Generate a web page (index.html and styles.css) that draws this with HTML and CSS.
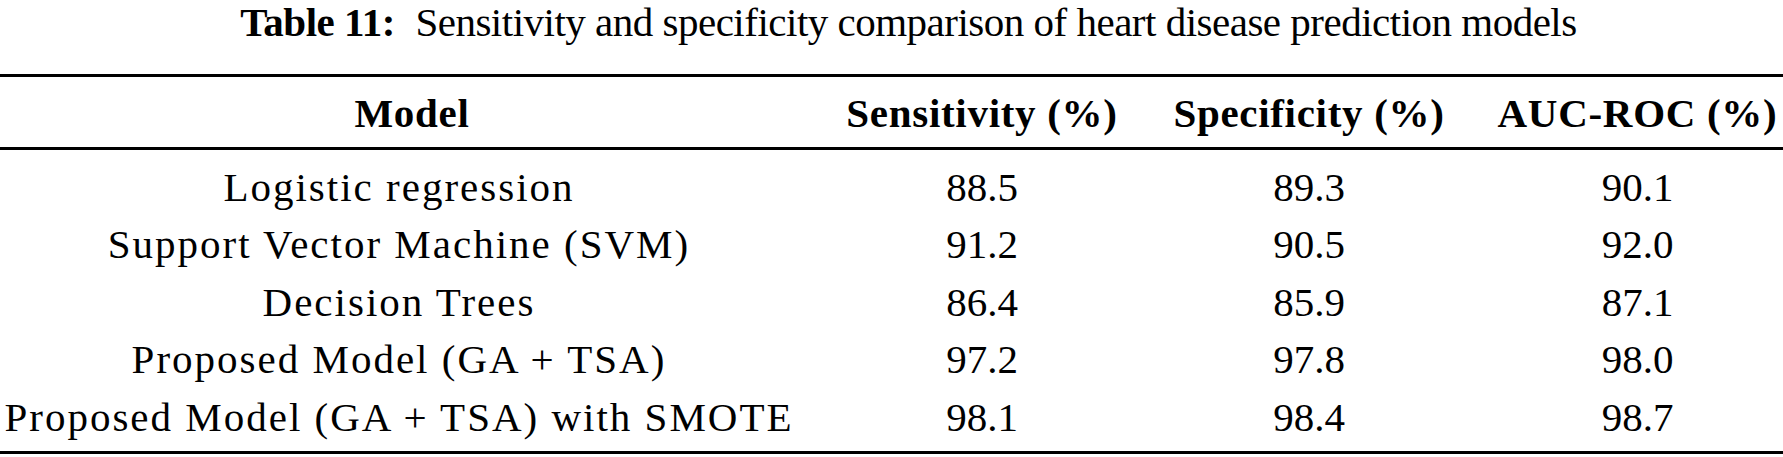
FILE: index.html
```html
<!DOCTYPE html>
<html>
<head>
<meta charset="utf-8">
<link rel="stylesheet" href="styles.css">
</head>
<body>
<div class="page">
  <div class="caption"><b class="cap-label">Table 11:</b>&nbsp; <span class="cap-text">Sensitivity and specificity comparison of heart disease prediction models</span></div>
  <div class="table">
    <div class="row head">
      <div class="cell c1 head-model">Model</div>
      <div class="cell c2">Sensitivity (%)</div>
      <div class="cell c3">Specificity (%)</div>
      <div class="cell c4">AUC-ROC (%)</div>
    </div>
    <div class="body">
      <div class="row">
        <div class="cell c1 name">Logistic regression</div>
        <div class="cell c2">88.5</div>
        <div class="cell c3">89.3</div>
        <div class="cell c4">90.1</div>
      </div>
      <div class="row">
        <div class="cell c1 name">Support Vector Machine (SVM)</div>
        <div class="cell c2">91.2</div>
        <div class="cell c3">90.5</div>
        <div class="cell c4">92.0</div>
      </div>
      <div class="row">
        <div class="cell c1 name">Decision Trees</div>
        <div class="cell c2">86.4</div>
        <div class="cell c3">85.9</div>
        <div class="cell c4">87.1</div>
      </div>
      <div class="row">
        <div class="cell c1 name">Proposed Model (GA + TSA)</div>
        <div class="cell c2">97.2</div>
        <div class="cell c3">97.8</div>
        <div class="cell c4">98.0</div>
      </div>
      <div class="row">
        <div class="cell c1 name">Proposed Model (GA + TSA) with SMOTE</div>
        <div class="cell c2">98.1</div>
        <div class="cell c3">98.4</div>
        <div class="cell c4">98.7</div>
      </div>
    </div>
  </div>
</div>
</body>
</html>
```

FILE: styles.css
```css
html, body {
  margin: 0;
  padding: 0;
  background: #ffffff;
}

.page {
  width: 1783px;
  font-family: "Liberation Serif", "Times New Roman", serif;
  font-size: 41px;
  color: #000000;
}

.caption {
  line-height: 45px;
  text-align: center;
  padding-left: 34px;
  white-space: nowrap;
}

.cap-label {
  font-weight: bold;
  letter-spacing: -0.5px;
}

.cap-text {
  letter-spacing: -0.5px;
}

.table {
  margin-top: 29px;
  border-top: 3px solid #000;
  border-bottom: 3px solid #000;
}

.row {
  display: grid;
  grid-template-columns: 798px 368px 286px 331px;
  line-height: 57.5px;
}

.cell {
  text-align: center;
  white-space: nowrap;
}

.c4 {
  padding-left: 40px;
}

.head {
  font-weight: bold;
  padding-top: 8px;
  padding-bottom: 4px;
  border-bottom: 3px solid #000;
}

.head .cell {
  letter-spacing: 0.7px;
}

.head .head-model {
  padding-left: 26px;
}

.body {
  padding-top: 9px;
  padding-bottom: 5px;
}

.name {
  letter-spacing: 2px;
}
```
